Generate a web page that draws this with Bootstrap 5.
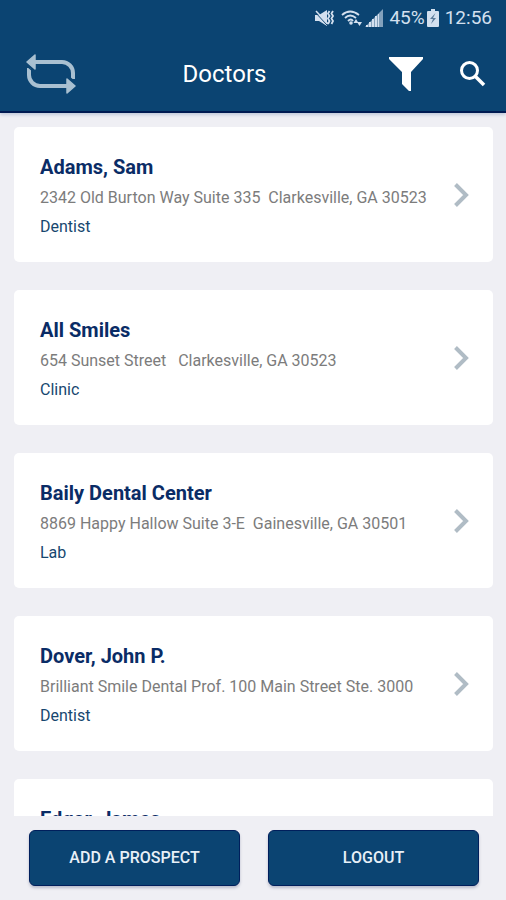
<!DOCTYPE html>
<html lang="en">
<head>
<meta charset="utf-8">
<meta name="viewport" content="width=device-width, initial-scale=1">
<title>Doctors</title>
<link href="https://cdn.jsdelivr.net/npm/bootstrap@5.3.0/dist/css/bootstrap.min.css" rel="stylesheet">
<style>
  body { font-family: Roboto, "Liberation Sans", sans-serif; background: #efeff4; }
  .app-header { background: #0b4472; border-bottom: 2px solid #001a52; box-shadow: 0 2px 3px #c3cbdc; z-index: 1; }
  .status-bar { height: 36px; padding: 0 14px; gap: 2px; font-size: 19px; line-height: 36px; color: #d3e0ef; }
  .status-bar svg { fill: #d3e0ef; }
  .title-bar { height: 75px; padding: 0 20px 0 26px; }
  .title-bar h1 { font-size: 24px; line-height: 28px; }
  .filter-button { margin-right: 34px; }
  .doctor-list { min-height: 0; padding: 14px 13px 0 14px; gap: 28px; }
  .doctor { min-height: 135px; padding: 24px 24px 20px 26px; border-radius: 5px; }
  .doctor svg { margin-bottom: 4px; }
  .doctor h2 { font-size: 20px; line-height: 32px; color: #0a2c66; }
  .doctor .address { font-size: 16px; line-height: 30px; color: #7c7c7c; white-space: pre-wrap; }
  .doctor .kind { font-size: 16px; line-height: 28px; color: #17476f; }
  .app-footer { padding: 14px 27px 14px 29px; gap: 28px; }
  .action { --bs-btn-bg: #0b4472; --bs-btn-hover-bg: #0d5189; --bs-btn-active-bg: #083659; --bs-btn-border-color: #001f5c;
    --bs-btn-color: #e8f0f8; --bs-btn-hover-color: #fff; --bs-btn-active-color: #fff; --bs-btn-border-radius: 6px;
    --bs-btn-font-weight: 500; height: 56px; flex: 1 1 0; font-size: 16px; box-shadow: 0 2px 3px #b9bccb; }
</style>
<script src="https://cdn.jsdelivr.net/npm/bootstrap@5.3.0/dist/js/bootstrap.bundle.min.js" defer></script>
</head>
<body>
<svg class="d-none" aria-hidden="true">
  <symbol id="chevron" viewBox="0 0 16 26"><path d="M2.500 2.500 13 13 2.500 23.500" fill="none" stroke="#b0bcc5" stroke-width="4"/></symbol>
</svg>
<div class="vh-100 d-flex flex-column overflow-hidden">
  <header class="app-header position-relative flex-shrink-0">
    <div class="status-bar d-flex align-items-center justify-content-end">
      <svg class="me-1" width="20" height="18" viewBox="0 0 20 18" aria-hidden="true"><path d="M0 6h4l8-5v16l-8-5H0z"/><path d="M0 3 12 16" stroke="#0b4472" stroke-width="1"/><path d="M1 2 13 15" stroke="#d3e0ef" stroke-width="1.500"/><path d="m14.500 2-1.500 2.500 1.500 2.500L13 9.500l1.500 2.500-1.500 3M18 2l-1.500 2.500L18 7l-1.500 2.500L18 12l-1.500 3" fill="none" stroke="#d3e0ef" stroke-width="1.800"/></svg>
      <svg width="22" height="18" viewBox="0 0 22 18" aria-hidden="true"><path d="M1 6Q9-1 18 6M4 9Q9 4 15 9M7 12q3-3 5 0" fill="none" stroke="#d3e0ef" stroke-width="1.800"/><circle cx="10" cy="14" r="1.800"/><path d="m15 10 2.500 4h-5zM18.500 17 16 13h5z"/></svg>
      <svg width="18" height="18" viewBox="0 0 18 18" aria-hidden="true"><path d="M0 18 18 0v18z" opacity=".6"/><path d="M1 16h2v2H1zM4 13h2v5H4zM7 10h2v8H7zM10 7h2v11h-2zM13 5h1v13h-1z"/></svg>
      <span class="ms-1">45%</span>
      <svg width="12" height="18" viewBox="0 0 12 18" aria-hidden="true"><path d="M4 0h4v2h3q1 0 1 1v14q0 1-1 1H1q-1 0-1-1V3q0-1 1-1h3z"/><path d="M8.500 4 3 10h3l-2 5 5-6H6z" fill="#5b7b99"/></svg>
      <time class="ms-1">12:56</time>
    </div>
    <div class="title-bar d-flex align-items-center text-white">
      <button type="button" class="btn border-0 p-0 d-flex" aria-label="Refresh">
        <svg width="50" height="40" viewBox="0 0 50 40" aria-hidden="true"><path d="M7 8h29a11 11 0 0 1 11 11v6M43 32H14A11 11 0 0 1 3 21v-7" fill="none" stroke="#a9c0d1" stroke-width="4"/><path d="M9 1v14L1 8zM41 25v14l8-7z" fill="#a9c0d1" stroke="#a9c0d1" stroke-width="1.500" stroke-linejoin="round"/><path d="m1 12 7 6M49 28l-7-6" stroke="#0b4472" stroke-width="1.500"/></svg>
      </button>
      <h1 class="my-0 ms-0 me-3 fw-normal flex-fill text-center">Doctors</h1>
      <button type="button" class="btn border-0 p-0 d-flex filter-button" aria-label="Filter">
        <svg width="36" height="36" viewBox="0 0 36 36" aria-hidden="true"><path d="M0 1h34v2L22 16v19h-2l-7-7V16L0 3z" fill="#fff"/></svg>
      </button>
      <button type="button" class="btn border-0 p-0 d-flex" aria-label="Search">
        <svg width="27" height="26" viewBox="0 0 27 26" aria-hidden="true"><circle cx="10.500" cy="9.500" r="8" fill="none" stroke="#fff" stroke-width="3"/><path d="m16 15 9 9" stroke="#fff" stroke-width="3.500"/></svg>
      </button>
    </div>
  </header>

  <main class="doctor-list flex-fill overflow-hidden d-flex flex-column">
    <a href="#adams" class="doctor flex-shrink-0 bg-white text-decoration-none d-flex align-items-center">
      <div class="flex-fill align-self-start"><h2 class="m-0 fw-bold">Adams, Sam</h2><div class="address">2342 Old Burton Way Suite 335  Clarkesville, GA 30523</div><div class="kind">Dentist</div></div>
      <svg width="16" height="26" aria-hidden="true"><use href="#chevron"/></svg>
    </a>
    <a href="#all-smiles" class="doctor flex-shrink-0 bg-white text-decoration-none d-flex align-items-center">
      <div class="flex-fill align-self-start"><h2 class="m-0 fw-bold">All Smiles</h2><div class="address">654 Sunset Street   Clarkesville, GA 30523</div><div class="kind">Clinic</div></div>
      <svg width="16" height="26" aria-hidden="true"><use href="#chevron"/></svg>
    </a>
    <a href="#baily" class="doctor flex-shrink-0 bg-white text-decoration-none d-flex align-items-center">
      <div class="flex-fill align-self-start"><h2 class="m-0 fw-bold">Baily Dental Center</h2><div class="address">8869 Happy Hallow Suite 3-E  Gainesville, GA 30501</div><div class="kind">Lab</div></div>
      <svg width="16" height="26" aria-hidden="true"><use href="#chevron"/></svg>
    </a>
    <a href="#dover" class="doctor flex-shrink-0 bg-white text-decoration-none d-flex align-items-center">
      <div class="flex-fill align-self-start"><h2 class="m-0 fw-bold">Dover, John P.</h2><div class="address">Brilliant Smile Dental Prof. 100 Main Street Ste. 3000</div><div class="kind">Dentist</div></div>
      <svg width="16" height="26" aria-hidden="true"><use href="#chevron"/></svg>
    </a>
    <a href="#edgar" class="doctor flex-shrink-0 bg-white text-decoration-none d-flex align-items-center">
      <div class="flex-fill align-self-start"><h2 class="m-0 fw-bold">Edgar, James</h2></div>
    </a>
  </main>

  <footer class="app-footer flex-shrink-0 d-flex">
    <button type="button" class="btn action">ADD A PROSPECT</button>
    <button type="button" class="btn action">LOGOUT</button>
  </footer>
</div>
</body>
</html>
